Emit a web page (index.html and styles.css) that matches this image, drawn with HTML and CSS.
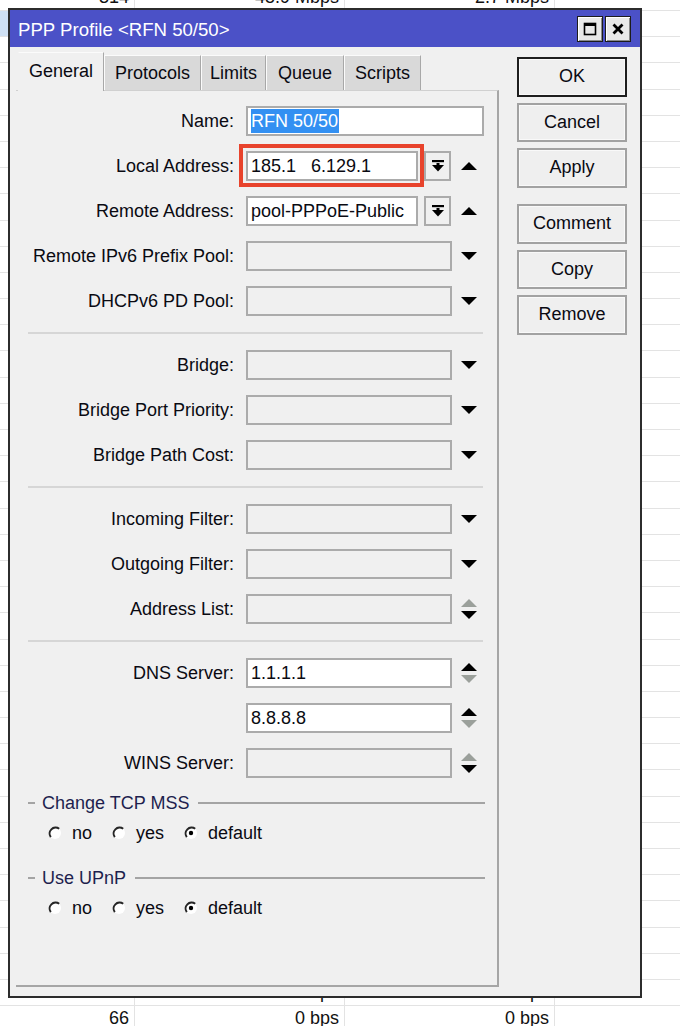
FILE: index.html
```html
<!DOCTYPE html>
<html>
<head>
<meta charset="utf-8">
<link rel="stylesheet" href="styles.css">
</head>
<body>
<div class="table">
  <div class="trow"><div>314</div><div>45.9 Mbps</div><div>2.7 Mbps</div><div></div></div>
  <div class="trow sel-row"><div></div><div></div><div></div><div></div></div>
  <div class="trow"><div></div><div></div><div></div><div></div></div>
  <div class="trow"><div></div><div></div><div></div><div></div></div>
  <div class="trow"><div></div><div></div><div></div><div></div></div>
  <div class="trow"><div></div><div></div><div></div><div></div></div>
  <div class="trow"><div></div><div></div><div></div><div></div></div>
  <div class="trow"><div></div><div></div><div></div><div></div></div>
  <div class="trow"><div></div><div></div><div></div><div></div></div>
  <div class="trow"><div></div><div></div><div></div><div></div></div>
  <div class="trow"><div></div><div></div><div></div><div></div></div>
  <div class="trow"><div></div><div></div><div></div><div></div></div>
  <div class="trow"><div></div><div></div><div></div><div></div></div>
  <div class="trow"><div></div><div></div><div></div><div></div></div>
  <div class="trow"><div></div><div></div><div></div><div></div></div>
  <div class="trow"><div></div><div></div><div></div><div></div></div>
  <div class="trow"><div></div><div></div><div></div><div></div></div>
  <div class="trow"><div></div><div></div><div></div><div></div></div>
  <div class="trow"><div></div><div></div><div></div><div></div></div>
  <div class="trow"><div></div><div></div><div></div><div></div></div>
  <div class="trow"><div></div><div></div><div></div><div></div></div>
  <div class="trow"><div></div><div></div><div></div><div></div></div>
  <div class="trow"><div></div><div></div><div></div><div></div></div>
  <div class="trow"><div></div><div></div><div></div><div></div></div>
  <div class="trow"><div></div><div></div><div></div><div></div></div>
  <div class="trow"><div></div><div></div><div></div><div></div></div>
  <div class="trow"><div></div><div></div><div></div><div></div></div>
  <div class="trow"><div></div><div></div><div></div><div></div></div>
  <div class="trow"><div></div><div></div><div></div><div></div></div>
  <div class="trow"><div></div><div></div><div></div><div></div></div>
  <div class="trow"><div></div><div></div><div></div><div></div></div>
  <div class="trow"><div></div><div></div><div></div><div></div></div>
  <div class="trow"><div></div><div></div><div></div><div></div></div>
  <div class="trow"><div></div><div></div><div></div><div></div></div>
  <div class="trow"><div></div><div></div><div></div><div></div></div>
  <div class="trow"><div></div><div></div><div></div><div></div></div>
  <div class="trow"><div></div><div></div><div></div><div></div></div>
  <div class="trow"><div></div><div></div><div></div><div></div></div>
  <div class="trow"><div>0</div><div>0 bps</div><div>0 bps</div><div></div></div>
  <div class="trow"><div>66</div><div>0 bps</div><div>0 bps</div><div></div></div>
</div>

<div class="window">
  <div class="titlebar">
    <span class="title">PPP Profile &lt;RFN 50/50&gt;</span>
    <div class="tbtns">
      <div class="tbtn"><svg width="14" height="14" viewBox="0 0 14 14"><rect x="1.5" y="1.5" width="11" height="11" fill="none" stroke="#000" stroke-width="1.6"/><rect x="1" y="1" width="12" height="3" fill="#000"/></svg></div>
      <div class="tbtn"><svg width="14" height="14" viewBox="0 0 14 14"><path d="M2.5 2.5 L11.5 11.5 M11.5 2.5 L2.5 11.5" stroke="#000" stroke-width="2.8"/></svg></div>
    </div>
  </div>
  <div class="wbody">
    <div class="leftcol">
      <div class="tabs">
        <div class="tab active t-general">General</div>
        <div class="tab t-protocols">Protocols</div>
        <div class="tab t-limits">Limits</div>
        <div class="tab t-queue">Queue</div>
        <div class="tab t-scripts">Scripts</div>
      </div>
      <div class="panel">
        <div class="row">
          <span class="lbl">Name:</span>
          <div class="field white f-name"><span class="selected">RFN 50/50</span></div>
        </div>
        <div class="row">
          <span class="lbl">Local Address:</span>
          <div class="field white f-short"><span>185.1</span><span class="redact">6.129.1</span></div>
          <div class="ddbtn"><svg width="12" height="12" viewBox="0 0 12 12"><rect x="0" y="0" width="12" height="2.2" fill="#000"/><rect x="4.5" y="3" width="3" height="3" fill="#000"/><path d="M0 5 L12 5 L6 11.5 Z" fill="#000"/></svg></div>
          <span class="arr"><svg width="16" height="8" viewBox="0 0 16 8"><path d="M0 8 L8 0 L16 8 Z" fill="#000"/></svg></span>
        </div>
        <div class="row">
          <span class="lbl">Remote Address:</span>
          <div class="field white f-short">pool-PPPoE-Public</div>
          <div class="ddbtn"><svg width="12" height="12" viewBox="0 0 12 12"><rect x="0" y="0" width="12" height="2.2" fill="#000"/><rect x="4.5" y="3" width="3" height="3" fill="#000"/><path d="M0 5 L12 5 L6 11.5 Z" fill="#000"/></svg></div>
          <span class="arr"><svg width="16" height="8" viewBox="0 0 16 8"><path d="M0 8 L8 0 L16 8 Z" fill="#000"/></svg></span>
        </div>
        <div class="row">
          <span class="lbl">Remote IPv6 Prefix Pool:</span>
          <div class="field f-mid"></div>
          <span class="arr"><svg width="16" height="8" viewBox="0 0 16 8"><path d="M0 0 L16 0 L8 8 Z" fill="#000"/></svg></span>
        </div>
        <div class="row">
          <span class="lbl">DHCPv6 PD Pool:</span>
          <div class="field f-mid"></div>
          <span class="arr"><svg width="16" height="8" viewBox="0 0 16 8"><path d="M0 0 L16 0 L8 8 Z" fill="#000"/></svg></span>
        </div>
        <div class="sep"></div>
        <div class="row">
          <span class="lbl">Bridge:</span>
          <div class="field f-mid"></div>
          <span class="arr"><svg width="16" height="8" viewBox="0 0 16 8"><path d="M0 0 L16 0 L8 8 Z" fill="#000"/></svg></span>
        </div>
        <div class="row">
          <span class="lbl">Bridge Port Priority:</span>
          <div class="field f-mid"></div>
          <span class="arr"><svg width="16" height="8" viewBox="0 0 16 8"><path d="M0 0 L16 0 L8 8 Z" fill="#000"/></svg></span>
        </div>
        <div class="row">
          <span class="lbl">Bridge Path Cost:</span>
          <div class="field f-mid"></div>
          <span class="arr"><svg width="16" height="8" viewBox="0 0 16 8"><path d="M0 0 L16 0 L8 8 Z" fill="#000"/></svg></span>
        </div>
        <div class="sep"></div>
        <div class="row">
          <span class="lbl">Incoming Filter:</span>
          <div class="field f-mid"></div>
          <span class="arr"><svg width="16" height="8" viewBox="0 0 16 8"><path d="M0 0 L16 0 L8 8 Z" fill="#000"/></svg></span>
        </div>
        <div class="row">
          <span class="lbl">Outgoing Filter:</span>
          <div class="field f-mid"></div>
          <span class="arr"><svg width="16" height="8" viewBox="0 0 16 8"><path d="M0 0 L16 0 L8 8 Z" fill="#000"/></svg></span>
        </div>
        <div class="row">
          <span class="lbl">Address List:</span>
          <div class="field f-mid"></div>
          <span class="arr"><svg width="16" height="20" viewBox="0 0 16 20"><path d="M0 8 L8 0 L16 8 Z" fill="#9ba09b"/><path d="M0 12 L16 12 L8 20 Z" fill="#000"/></svg></span>
        </div>
        <div class="sep"></div>
        <div class="row">
          <span class="lbl">DNS Server:</span>
          <div class="field white f-mid">1.1.1.1</div>
          <span class="arr"><svg width="16" height="20" viewBox="0 0 16 20"><path d="M0 8 L8 0 L16 8 Z" fill="#000"/><path d="M0 12 L16 12 L8 20 Z" fill="#9ba09b"/></svg></span>
        </div>
        <div class="row">
          <span class="lbl"></span>
          <div class="field white f-mid">8.8.8.8</div>
          <span class="arr"><svg width="16" height="20" viewBox="0 0 16 20"><path d="M0 8 L8 0 L16 8 Z" fill="#000"/><path d="M0 12 L16 12 L8 20 Z" fill="#9ba09b"/></svg></span>
        </div>
        <div class="row">
          <span class="lbl">WINS Server:</span>
          <div class="field f-mid"></div>
          <span class="arr"><svg width="16" height="20" viewBox="0 0 16 20"><path d="M0 8 L8 0 L16 8 Z" fill="#9ba09b"/><path d="M0 12 L16 12 L8 20 Z" fill="#000"/></svg></span>
        </div>

        <div class="ghead"><span class="dash"></span><span class="gtitle">Change TCP MSS</span><span class="gline"></span></div>
        <div class="radios">
          <span class="radio"><svg width="14" height="14" viewBox="0 0 14 14"><circle cx="7" cy="7" r="6" fill="#fff"/><path d="M11.2 2.8 A6 6 0 0 0 2.8 11.2" fill="none" stroke="#262626" stroke-width="2"/></svg>no</span>
          <span class="radio"><svg width="14" height="14" viewBox="0 0 14 14"><circle cx="7" cy="7" r="6" fill="#fff"/><path d="M11.2 2.8 A6 6 0 0 0 2.8 11.2" fill="none" stroke="#262626" stroke-width="2"/></svg>yes</span>
          <span class="radio"><svg width="14" height="14" viewBox="0 0 14 14"><circle cx="7" cy="7" r="6" fill="#fff"/><path d="M11.2 2.8 A6 6 0 0 0 2.8 11.2" fill="none" stroke="#262626" stroke-width="2"/><circle cx="7" cy="7" r="2.2" fill="#000"/></svg>default</span>
        </div>
        <div class="ghead g2"><span class="dash"></span><span class="gtitle">Use UPnP</span><span class="gline"></span></div>
        <div class="radios">
          <span class="radio"><svg width="14" height="14" viewBox="0 0 14 14"><circle cx="7" cy="7" r="6" fill="#fff"/><path d="M11.2 2.8 A6 6 0 0 0 2.8 11.2" fill="none" stroke="#262626" stroke-width="2"/></svg>no</span>
          <span class="radio"><svg width="14" height="14" viewBox="0 0 14 14"><circle cx="7" cy="7" r="6" fill="#fff"/><path d="M11.2 2.8 A6 6 0 0 0 2.8 11.2" fill="none" stroke="#262626" stroke-width="2"/></svg>yes</span>
          <span class="radio"><svg width="14" height="14" viewBox="0 0 14 14"><circle cx="7" cy="7" r="6" fill="#fff"/><path d="M11.2 2.8 A6 6 0 0 0 2.8 11.2" fill="none" stroke="#262626" stroke-width="2"/><circle cx="7" cy="7" r="2.2" fill="#000"/></svg>default</span>
        </div>
      </div>
    </div>
    <div class="btncol">
      <div class="btn default">OK</div>
      <div class="btn">Cancel</div>
      <div class="btn">Apply</div>
      <div class="btn spaced">Comment</div>
      <div class="btn">Copy</div>
      <div class="btn">Remove</div>
    </div>
  </div>
</div>
<div class="annot"></div>
</body>
</html>
```

FILE: styles.css
```css
* { box-sizing: border-box; }
html, body { margin: 0; padding: 0; }
body {
  width: 680px;
  height: 1026px;
  overflow: hidden;
  position: relative;
  background: #fff;
  font-family: "Liberation Sans", Arial, sans-serif;
  font-size: 18px;
  color: #0a0a12;
}

/* background table */
.table { margin-top: -15.2px; }
.trow {
  display: grid;
  grid-template-columns: 135px 210px 210px 1fr;
  height: 26.2px;
  border-bottom: 1px solid #e3e3e3;
}
.trow > div {
  border-right: 1px solid #e3e3e3;
  text-align: right;
  padding-right: 5px;
  line-height: 25px;
  color: #111;
}
.trow > div:last-child { border-right: none; }
.sel-row { background: linear-gradient(to right, #cfe0f3 0, #cfe0f3 9px, transparent 9px); }

/* window */
.window {
  position: absolute;
  left: 8px;
  top: 8px;
  width: 634px;
  height: 990px;
  border: 2px solid #2c2c2c;
  background: #f0f0f0;
  display: flex;
  flex-direction: column;
}
.titlebar {
  height: 37px;
  flex: none;
  background: #4b51c7;
  display: flex;
  align-items: center;
  justify-content: space-between;
  padding: 0 9px 0 8px;
  color: #fff;
}
.title { font-size: 18.6px; padding-top: 3px; }
.tbtns { display: flex; gap: 2px; padding-top: 1px; }
.tbtn {
  width: 26px;
  height: 26px;
  background: #e9e9e9;
  border: 1px solid #1c1c1c;
  box-shadow: inset 1px 1px 0 #fff, inset -1px -1px 0 #8a8a8a;
  display: flex;
  align-items: center;
  justify-content: center;
}

.wbody {
  flex: 1;
  display: flex;
  padding: 5px 0 9px 6px;
}
.leftcol {
  width: 483px;
  display: flex;
  flex-direction: column;
}
.tabs {
  display: flex;
  align-items: flex-end;
  height: 38px;
  padding-left: 2px;
  position: relative;
  z-index: 2;
}
.tab {
  height: 35px;
  background: #d9d9d9;
  border-top: 1px solid #fbfbfb;
  border-left: 1px solid #fbfbfb;
  border-right: 1px solid #a8a8a8;
  text-align: center;
  line-height: 34px;
}
.tab.active {
  height: 39px;
  margin-bottom: -1px;
  background: #f0f0f0;
  border-left-color: #f0f0f0;
  line-height: 36px;
}
.t-general { width: 86px; }
.t-protocols { width: 97px; }
.t-limits { width: 65px; }
.t-queue { width: 78px; }
.t-scripts { width: 77px; }

.panel {
  flex: 1;
  border-top: 1px solid #d0d0d0;
  border-right: 2px solid #a6a6a6;
  border-bottom: 2px solid #a6a6a6;
  padding-top: 15px;
  display: flex;
  flex-direction: column;
}
.row {
  display: flex;
  align-items: center;
  height: 30px;
  margin-bottom: 15px;
}
.lbl {
  width: 218px;
  margin-right: 12px;
  text-align: right;
  white-space: nowrap;
}
.field {
  height: 30px;
  border: 2px solid #ababab;
  background: #f0f0f0;
  padding-left: 3px;
  line-height: 26px;
  white-space: nowrap;
  overflow: hidden;
}
.field.white { background: #fff; }
.f-name { width: 238px; padding-top: 1px; line-height: 24px; }
.f-short { width: 172px; }
.f-mid { width: 206px; }
.selected {
  display: inline-block;
  background: #3390f2;
  color: #fff;
  padding-right: 1px;
}
.redact { margin-left: 15px; }
.ddbtn {
  width: 27px;
  height: 30px;
  margin-left: 6px;
  border: 2px solid #ababab;
  background: #f0f0f0;
  display: flex;
  align-items: center;
  justify-content: center;
}
.arr {
  margin-left: 9px;
  width: 16px;
  display: flex;
  align-items: center;
  justify-content: center;
}
.ddbtn + .arr { margin-left: 10px; }
.arr svg { display: block; }

.sep {
  height: 2px;
  background: #d6d6d6;
  margin: 1px 14px 16px 12px;
}

.ghead {
  display: flex;
  align-items: center;
  height: 20px;
  padding-left: 12px;
  padding-right: 12px;
}
.g2 { margin-top: 25px; }
.dash { width: 7px; height: 2px; background: #a4a4a4; }
.gtitle { margin: 0 9px 0 7px; color: #1e1f4e; white-space: nowrap; }
.gline { flex: 1; height: 2px; background: #a4a4a4; }

.radios {
  display: flex;
  align-items: center;
  height: 20px;
  margin-top: 10px;
  padding-left: 32px;
  gap: 20px;
}
.radio { display: flex; align-items: center; gap: 10px; }
.radio svg { display: block; }

.btncol {
  margin-left: 18px;
  padding-top: 5px;
  display: flex;
  flex-direction: column;
  gap: 6px;
}
.btn {
  width: 110px;
  height: 39.5px;
  border: 2px solid #a2a2a2;
  box-shadow: inset 0 0 0 1px #f9f9f9;
  background: #efefef;
  display: flex;
  align-items: center;
  justify-content: center;
}
.btn.default { border-color: #1e1e1e; }
.btn.spaced { margin-top: 10.5px; }

.annot {
  position: absolute;
  left: 239px;
  top: 144px;
  width: 185px;
  height: 43px;
  border: 4px solid #e8432c;
}
```
